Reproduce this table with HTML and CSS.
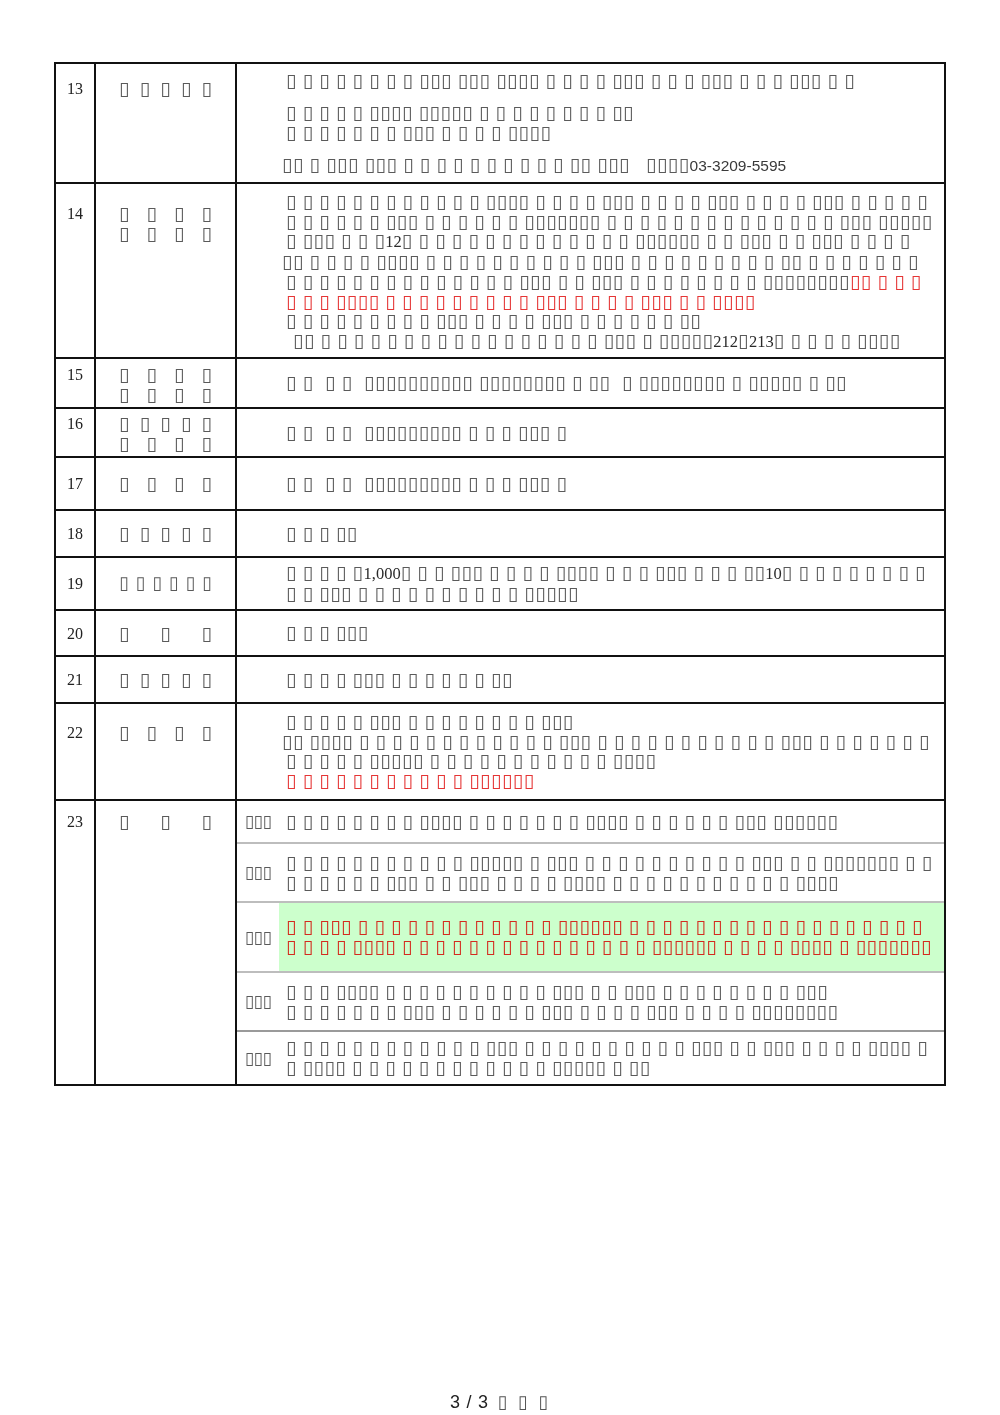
FILE: index.html
```html
<!DOCTYPE html>
<html lang="ja">
<head>
<meta charset="utf-8">
<title>3 / 3</title>
<link rel="stylesheet" href="styles.css">
</head>
<body>
<div class="tbl">

  <div class="row r13 top">
    <div class="num">13</div>
    <div class="lab"><div class="j">▯ ▯ ▯ ▯ ▯</div></div>
    <div class="txt">
      <div class="para"><div class="l">▯ ▯ ▯ ▯ ▯ ▯ ▯ ▯ ▯▯▯ ▯▯▯ ▯▯▯▯ ▯ ▯ ▯ ▯ ▯▯▯ ▯ ▯ ▯ ▯▯▯ ▯ ▯ ▯ ▯▯▯ ▯ ▯</div></div>
      <div class="para">
        <div class="l">▯ ▯ ▯ ▯ ▯ ▯▯▯▯ ▯▯▯▯▯ ▯ ▯ ▯ ▯ ▯ ▯ ▯ ▯ ▯▯</div>
        <div class="l">▯ ▯ ▯ ▯ ▯ ▯ ▯ ▯▯▯ ▯ ▯ ▯ ▯ ▯▯▯▯</div>
      </div>
      <div class="para"><div class="l o">▯▯ ▯ ▯▯▯ ▯▯▯ ▯ ▯ ▯ ▯ ▯ ▯ ▯ ▯ ▯ ▯ ▯▯ ▯▯▯<span class="gap"></span>▯▯▯▯<span class="ph">03-3209-5595</span></div></div>
    </div>
  </div>

  <div class="row r14 top">
    <div class="num">14</div>
    <div class="lab"><div class="j">▯ ▯ ▯ ▯</div><div class="j">▯ ▯ ▯ ▯</div></div>
    <div class="txt">
      <div class="l">▯ ▯ ▯ ▯ ▯ ▯ ▯ ▯ ▯ ▯ ▯ ▯ ▯▯▯▯ ▯ ▯ ▯ ▯ ▯▯▯ ▯ ▯ ▯ ▯ ▯▯▯ ▯ ▯ ▯ ▯ ▯▯▯ ▯ ▯ ▯ ▯ ▯</div>
      <div class="l">▯ ▯ ▯ ▯ ▯ ▯ ▯▯▯ ▯ ▯ ▯ ▯ ▯ ▯ ▯▯▯▯▯▯▯ ▯ ▯ ▯ ▯ ▯ ▯ ▯ ▯ ▯ ▯ ▯ ▯ ▯ ▯ ▯▯▯ ▯▯▯▯▯</div>
      <div class="l">▯ ▯▯▯ ▯ ▯ ▯<span class="n">12</span>▯ ▯ ▯ ▯ ▯ ▯ ▯ ▯ ▯ ▯ ▯ ▯ ▯ ▯ ▯▯▯▯▯▯ ▯ ▯ ▯▯▯ ▯ ▯ ▯▯▯ ▯ ▯ ▯ ▯</div>
      <div class="l o">▯▯ ▯ ▯ ▯ ▯ ▯▯▯▯ ▯ ▯ ▯ ▯ ▯ ▯ ▯ ▯ ▯ ▯ ▯▯▯ ▯ ▯ ▯ ▯ ▯ ▯ ▯ ▯ ▯ ▯▯ ▯ ▯ ▯ ▯ ▯ ▯ ▯</div>
      <div class="l">▯ ▯ ▯ ▯ ▯ ▯ ▯ ▯ ▯ ▯ ▯ ▯ ▯ ▯ ▯▯▯ ▯ ▯ ▯▯▯ ▯ ▯ ▯ ▯ ▯ ▯ ▯ ▯ ▯▯▯▯▯▯▯▯<span class="red">▯▯ ▯ ▯ ▯</span></div>
      <div class="l red">▯ ▯ ▯ ▯▯▯▯ ▯ ▯ ▯ ▯ ▯ ▯ ▯ ▯ ▯ ▯▯▯ ▯ ▯ ▯ ▯ ▯▯▯ ▯ ▯ ▯▯▯▯</div>
      <div class="l">▯ ▯ ▯ ▯ ▯ ▯ ▯ ▯ ▯ ▯▯▯ ▯ ▯ ▯ ▯ ▯▯▯ ▯ ▯ ▯ ▯ ▯ ▯ ▯▯</div>
      <div class="l ind">▯▯ ▯ ▯ ▯ ▯ ▯ ▯ ▯ ▯ ▯ ▯ ▯ ▯ ▯ ▯ ▯ ▯ ▯ ▯▯▯ ▯ ▯▯▯▯▯<span class="n">212</span>▯<span class="n">213</span>▯ ▯ ▯ ▯ ▯ ▯▯▯▯</div>
    </div>
  </div>

  <div class="row r15">
    <div class="num">15</div>
    <div class="lab"><div class="j">▯ ▯ ▯ ▯</div><div class="j">▯ ▯ ▯ ▯</div></div>
    <div class="txt"><div class="l">▯ ▯&nbsp; ▯ ▯&nbsp; ▯▯▯▯▯▯▯▯▯▯ ▯▯▯▯▯▯▯▯ ▯ ▯▯&nbsp; ▯ ▯▯▯▯▯▯▯▯ ▯ ▯▯▯▯▯ ▯ ▯▯</div></div>
  </div>

  <div class="row r16">
    <div class="num">16</div>
    <div class="lab"><div class="j">▯ ▯ ▯ ▯ ▯</div><div class="j">▯ ▯ ▯ ▯</div></div>
    <div class="txt"><div class="l">▯ ▯&nbsp; ▯ ▯&nbsp; ▯▯▯▯▯▯▯▯▯ ▯ ▯ ▯ ▯▯▯ ▯</div></div>
  </div>

  <div class="row r17">
    <div class="num">17</div>
    <div class="lab"><div class="j">▯ ▯ ▯ ▯</div></div>
    <div class="txt"><div class="l">▯ ▯&nbsp; ▯ ▯&nbsp; ▯▯▯▯▯▯▯▯▯ ▯ ▯ ▯ ▯▯▯ ▯</div></div>
  </div>

  <div class="row r18">
    <div class="num">18</div>
    <div class="lab"><div class="j">▯ ▯ ▯ ▯ ▯</div></div>
    <div class="txt"><div class="l">▯ ▯ ▯ ▯▯</div></div>
  </div>

  <div class="row r19">
    <div class="num">19</div>
    <div class="lab"><div class="j sm">▯ ▯ ▯ ▯ ▯ ▯</div></div>
    <div class="txt">
      <div class="l">▯ ▯ ▯ ▯ ▯<span class="n">1,000</span>▯ ▯ ▯ ▯▯▯ ▯ ▯ ▯ ▯ ▯▯▯▯ ▯ ▯ ▯ ▯▯▯ ▯ ▯ ▯ ▯▯<span class="n">10</span>▯ ▯ ▯ ▯ ▯ ▯ ▯ ▯ ▯</div>
      <div class="l">▯ ▯ ▯▯▯ ▯ ▯ ▯ ▯ ▯ ▯ ▯ ▯ ▯ ▯ ▯▯▯▯▯</div>
    </div>
  </div>

  <div class="row r20">
    <div class="num">20</div>
    <div class="lab"><div class="j">▯ ▯ ▯</div></div>
    <div class="txt"><div class="l">▯ ▯ ▯ ▯▯▯</div></div>
  </div>

  <div class="row r21">
    <div class="num">21</div>
    <div class="lab"><div class="j">▯ ▯ ▯ ▯ ▯</div></div>
    <div class="txt"><div class="l">▯ ▯ ▯ ▯ ▯▯▯ ▯ ▯ ▯ ▯ ▯ ▯ ▯▯</div></div>
  </div>

  <div class="row r22 top">
    <div class="num">22</div>
    <div class="lab"><div class="j">▯ ▯ ▯ ▯</div></div>
    <div class="txt">
      <div class="l">▯ ▯ ▯ ▯ ▯ ▯▯▯ ▯ ▯ ▯ ▯ ▯ ▯ ▯ ▯ ▯▯▯</div>
      <div class="l o">▯▯ ▯▯▯▯ ▯ ▯ ▯ ▯ ▯ ▯ ▯ ▯ ▯ ▯ ▯ ▯ ▯▯▯ ▯ ▯ ▯ ▯ ▯ ▯ ▯ ▯ ▯ ▯ ▯ ▯▯▯ ▯ ▯ ▯ ▯ ▯ ▯ ▯</div>
      <div class="l">▯ ▯ ▯ ▯ ▯ ▯▯▯▯▯ ▯ ▯ ▯ ▯ ▯ ▯ ▯ ▯ ▯ ▯ ▯ ▯▯▯▯</div>
      <div class="l red">▯ ▯ ▯ ▯ ▯ ▯ ▯ ▯ ▯ ▯ ▯ ▯▯▯▯▯▯</div>
    </div>
  </div>

  <div class="row r23 top">
    <div class="num">23</div>
    <div class="lab"><div class="j">▯ ▯ ▯</div></div>
    <div class="subs">
      <div class="sub s1">
        <div class="sl">▯▯▯</div>
        <div class="sc"><div class="l">▯ ▯ ▯ ▯ ▯ ▯ ▯ ▯ ▯▯▯▯ ▯ ▯ ▯ ▯ ▯ ▯ ▯ ▯▯▯▯ ▯ ▯ ▯ ▯ ▯ ▯ ▯▯▯ ▯▯▯▯▯▯</div></div>
      </div>
      <div class="sub s2">
        <div class="sl">▯▯▯</div>
        <div class="sc">
          <div class="l">▯ ▯ ▯ ▯ ▯ ▯ ▯ ▯ ▯ ▯ ▯ ▯▯▯▯▯ ▯ ▯▯▯ ▯ ▯ ▯ ▯ ▯ ▯ ▯ ▯ ▯ ▯ ▯▯▯ ▯ ▯ ▯▯▯▯▯▯▯ ▯ ▯</div>
          <div class="l">▯ ▯ ▯ ▯ ▯ ▯ ▯▯▯ ▯ ▯ ▯▯▯ ▯ ▯ ▯ ▯ ▯▯▯▯ ▯ ▯ ▯ ▯ ▯ ▯ ▯ ▯ ▯ ▯ ▯ ▯▯▯▯</div>
        </div>
      </div>
      <div class="sub s3">
        <div class="sl">▯▯▯</div>
        <div class="sc hl">
          <div class="l">▯ ▯ ▯▯▯ ▯ ▯ ▯ ▯ ▯ ▯ ▯ ▯ ▯ ▯ ▯ ▯ ▯▯▯▯▯▯ ▯ ▯ ▯ ▯ ▯ ▯ ▯ ▯ ▯ ▯ ▯ ▯ ▯ ▯ ▯ ▯ ▯ ▯</div>
          <div class="l">▯ ▯ ▯ ▯ ▯▯▯▯ ▯ ▯ ▯ ▯ ▯ ▯ ▯ ▯ ▯ ▯ ▯ ▯ ▯ ▯ ▯ ▯▯▯▯▯▯ ▯ ▯ ▯ ▯ ▯▯▯▯ ▯ ▯▯▯▯▯▯▯</div>
        </div>
      </div>
      <div class="sub s4">
        <div class="sl">▯▯▯</div>
        <div class="sc">
          <div class="l">▯ ▯ ▯ ▯▯▯▯ ▯ ▯ ▯ ▯ ▯ ▯ ▯ ▯ ▯ ▯ ▯▯▯ ▯ ▯ ▯▯▯ ▯ ▯ ▯ ▯ ▯ ▯ ▯ ▯ ▯▯▯</div>
          <div class="l">▯ ▯ ▯ ▯ ▯ ▯ ▯ ▯▯▯ ▯ ▯ ▯ ▯ ▯ ▯ ▯▯▯ ▯ ▯ ▯ ▯ ▯▯▯ ▯ ▯ ▯ ▯ ▯▯▯▯▯▯▯▯</div>
        </div>
      </div>
      <div class="sub s5">
        <div class="sl">▯▯▯</div>
        <div class="sc">
          <div class="l">▯ ▯ ▯ ▯ ▯ ▯ ▯ ▯ ▯ ▯ ▯ ▯ ▯▯▯ ▯ ▯ ▯ ▯ ▯ ▯ ▯ ▯ ▯ ▯ ▯▯▯ ▯ ▯ ▯▯▯ ▯ ▯ ▯ ▯ ▯▯▯▯ ▯</div>
          <div class="l">▯ ▯▯▯▯ ▯ ▯ ▯ ▯ ▯ ▯ ▯ ▯ ▯ ▯ ▯ ▯ ▯▯▯▯▯ ▯ ▯▯</div>
        </div>
      </div>
    </div>
  </div>

</div>

<div class="foot">3 / 3 <span class="fb">▯ ▯ ▯</span></div>
</body>
</html>
```
FILE: styles.css
```css
html, body {
  margin: 0;
  padding: 0;
  background: #fff;
}

body {
  padding-top: 62px;
}

.tbl {
  margin-left: 54px;
  width: 892px;
  box-sizing: border-box;
  border: 2px solid #111;
  font-family: "Liberation Serif", "DejaVu Sans", serif;
  font-size: 19px;
  color: #5a5a5a;
  will-change: transform;
}

.row {
  display: grid;
  grid-template-columns: 40px 141px 1fr;
  box-sizing: border-box;
  border-bottom: 2px solid #111;
  height: var(--h);
}

.row:last-child {
  border-bottom: 0;
}

.num, .lab {
  box-sizing: border-box;
  border-right: 2px solid #111;
  padding-top: var(--lp);
}

.num {
  text-align: center;
  font-size: 16px;
  line-height: 20px;
  color: #222;
}

.lab {
  padding-left: 23px;
}

.j {
  width: 93px;
  line-height: 19.5px;
  text-align: justify;
  text-align-last: justify;
}

.j.sm {
  font-size: 18px;
}

.txt {
  padding-left: 49px;
  display: flex;
  flex-direction: column;
  justify-content: center;
}

.row.top .txt {
  justify-content: flex-start;
  padding-top: var(--cp);
}

.l {
  white-space: nowrap;
  line-height: 19.7px;
  letter-spacing: 0.45px;
  word-spacing: 0.55px;
}

.l.o { margin-left: -4px; }
.l.ind { margin-left: 7px; }

.para + .para { margin-top: 12.5px; }

.n {
  font-size: 16.5px;
  letter-spacing: 0;
  color: #2a2a2a;
}

.ph {
  font-family: "Liberation Sans", sans-serif;
  font-size: 15.5px;
  letter-spacing: 0;
  color: #3a3a3a;
}

.gap {
  display: inline-block;
  width: 16px;
}

.red { color: #e53535; }

/* row geometry */
.r13 { --h: 120px; --lp: 15px; --cp: 7px; }
.r14 { --h: 175px; --lp: 20px; --cp: 8px; }
.r15 { --h: 50px;  --lp: 6px; }
.r16 { --h: 49px;  --lp: 5px; }
.r17 { --h: 53px;  --lp: 16px; }
.r18 { --h: 47px;  --lp: 13px; }
.r19 { --h: 53px;  --lp: 16px; }
.r20 { --h: 46px;  --lp: 13px; }
.r21 { --h: 47px;  --lp: 13px; }
.r22 { --h: 97px;  --lp: 19px; --cp: 8px; }
.r23 { --h: 283px; --lp: 11px; }

/* row 23 sub rows */
.subs {
  display: flex;
  flex-direction: column;
}

.sub {
  display: grid;
  grid-template-columns: 42px 1fr;
  box-sizing: border-box;
  border-bottom: 2px solid #bdbdbd;
  height: var(--sh);
}

.sub:last-child { border-bottom: 0; }

.s1 { --sh: 43px; }
.s2 { --sh: 59px; }
.s3 { --sh: 70px; }
.s4 { --sh: 59px; border-bottom-color: #9a9a9a; }
.s5 { --sh: 52px; }

.sl {
  display: flex;
  align-items: center;
  justify-content: center;
  font-size: 17px;
  letter-spacing: -0.45px;
}

.sc {
  padding-left: 7px;
  display: flex;
  flex-direction: column;
  justify-content: center;
}

.sc.hl {
  background: #ccffcc;
  color: #d42a1e;
}

.foot {
  margin-top: 306px;
  text-align: center;
  font-family: "Liberation Sans", "DejaVu Sans", sans-serif;
  font-size: 18px;
  line-height: 20px;
  color: #222;
  word-spacing: 1.5px;
  will-change: transform;
}

.fb {
  margin-left: 3px;
  letter-spacing: 2px;
  color: #555;
}
```
